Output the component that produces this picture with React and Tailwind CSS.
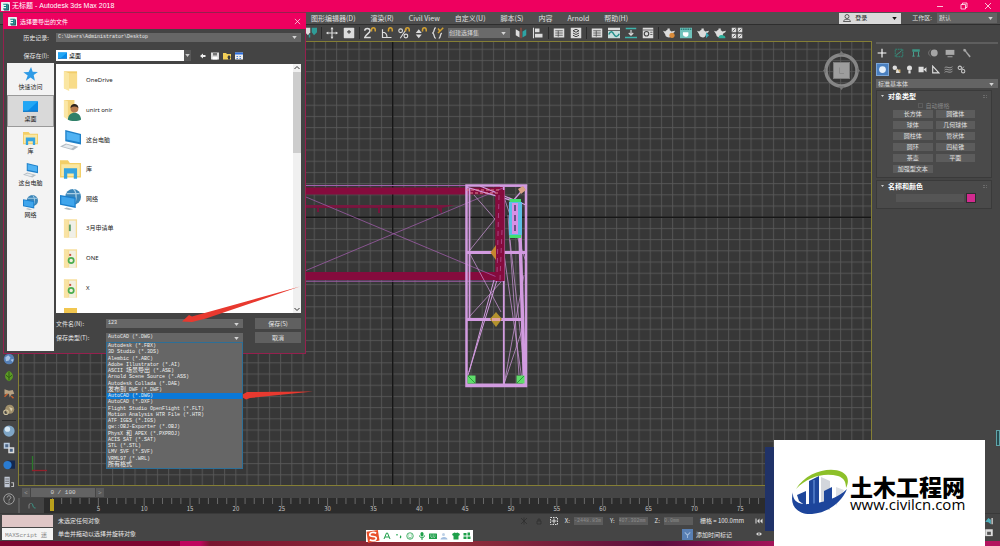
import React, { useState } from 'react';

const MENUS = ['图形编辑器(D)', '渲染(R)', 'Civil View', '自定义(U)', '脚本(S)', '内容', 'Arnold', '帮助(H)'];

const FORMATS = [
  ['Autodesk (*.FBX)'],
  ['3D Studio (*.3DS)'],
  ['Alembic (*.ABC)'],
  ['Adobe Illustrator (*.AI)'],
  ['ASCII ', '场景导出', ' (*.ASE)'],
  ['Arnold Scene Source (*.ASS)'],
  ['Autodesk Collada (*.DAE)'],
  ['', '发布到', ' DWF (*.DWF)'],
  ['AutoCAD (*.DWG)'],
  ['AutoCAD (*.DXF)'],
  ['Flight Studio OpenFlight (*.FLT)'],
  ['Motion Analysis HTR File (*.HTR)'],
  ['ATF IGES (*.IGS)'],
  ['gw::OBJ-Exporter (*.OBJ)'],
  ['PhysX ', '和', ' APEX (*.PXPROJ)'],
  ['ACIS SAT (*.SAT)'],
  ['STL (*.STL)'],
  ['LMV SVF (*.SVF)'],
  ['VRML97 (*.WRL)'],
  ['', '所有格式'],
];

const PRIMITIVES = ['长方体', '圆锥体', '球体', '几何球体', '圆柱体', '管状体', '圆环', '四棱锥', '茶壶', '平面', '加强型文本'];

const Svg = ({ className = 'size-3', children }) => (
  <svg viewBox="0 0 16 16" className={className} fill="none" aria-hidden="true">{children}</svg>
);

/* ---------- shell icons ---------- */

const MaxLogo = () => (
  <svg viewBox="0 0 16 16" className="size-[9px] shrink-0" aria-hidden="true">
    <rect width="16" height="16" rx="1" fill="#e8f4f4" />
    <path d="M4 3h8v10H4v-2h5V9H5V7h4V5H4z" fill="#137f86" />
    <path d="M12 3l2 2v10H6l-2-2h8z" fill="#0b4f5b" />
  </svg>
);

const Star = ({ className }) => (
  <Svg className={className}><path d="M8.6 0l1.7 5 5.6.2-4.5 3.4 1.3 6-4.7-3.4L3 14.6l2-5.5L.4 5.6l5.5-.3z" fill="#2f9be6" /></Svg>
);
const Desktop = ({ className }) => (
  <Svg className={className}>
    <path d="M0 2.500h16v11H0z" fill="#0a8be8" />
    <path d="M0 2.500h16L4 13.500H0z" fill="#22a7f5" />
    <path d="M0 12.500h16v1H0z" fill="#0b68b5" />
  </Svg>
);
const Library = ({ className }) => (
  <Svg className={className}>
    <path d="M0 1h6l1.500 2H16v11H0z" fill="#f3cf68" />
    <path d="M1 4h14v9H1z" fill="#fbe7a0" />
    <path d="M3 15V7h10v8h-2.500v-4h-5v4z" fill="#35a4e0" />
  </Svg>
);
const Computer = ({ className }) => (
  <Svg className={className}>
    <path d="M4 0l12 3v8L4 8.500z" fill="#1f80c8" />
    <path d="M5 1.300l10 2.500v5.500L5 7.300z" fill="#4fb2f3" />
    <path d="M0 12.500l4.500-2.300 9.500 2.600-4 2.700z" fill="#b4bdc4" />
    <path d="M2 12.500l3-1.400 6 1.700-2.500 1.400z" fill="#e6eaed" />
  </Svg>
);
const Network = ({ className }) => (
  <Svg className={className}>
    <circle cx="10" cy="6" r="6" fill="#3c86b8" />
    <path d="M10 0c3 2 3 9 0 12M5 3.500h10" stroke="#a9cfe6" />
    <path d="M0 4.500l12 2v8L0 12z" fill="#1b7fcb" />
    <path d="M1 5.700l10 1.700v5.700L1 11.200z" fill="#3fa5ec" />
    <path d="M5 14l5 1.500-3 .5-4-1z" fill="#aeb8be" />
  </Svg>
);
const Folder = ({ className }) => (
  <Svg className={className}>
    <path d="M3 1h10v13H3z" fill="#f1cd6b" />
    <path d="M3 1l4 1.500V16l-4-2z" fill="#fae6a2" />
    <path d="M7 2.500h6V14H7z" fill="#f8dc8a" />
  </Svg>
);
const UserFolder = ({ className }) => (
  <Svg className={className}>
    <path d="M3 0h8v13H3z" fill="#f4d47c" />
    <path d="M3 0l3 1v14l-3-2z" fill="#fbe7a6" />
    <circle cx="11" cy="6.500" r="3" fill="#b87c4f" />
    <path d="M8 6c0-4 6-4 6 0-2-1.500-4-1.500-6 0z" fill="#2d2520" />
    <path d="M6 15c0-7 10-7 10 0-2 1.300-8 1.300-10 0z" fill="#2f8069" />
  </Svg>
);
const DocFolder = ({ className }) => (
  <Svg className={className}>
    <path d="M3 1h10v14H3z" fill="#f6dc96" />
    <path d="M7 2h5v13H7z" fill="#f2efe0" />
    <path d="M3 1l3 1v13l-3-1z" fill="#f9e3a4" />
    <circle cx="8.500" cy="9.500" r="2" stroke="#4cae4f" strokeWidth="1.300" />
    <path d="M7 4.500h1.500V6H7z" fill="#c8503d" />
  </Svg>
);
const SheetFolder = ({ className }) => (
  <Svg className={className}>
    <path d="M3 1h10v14H3z" fill="#f6dc96" />
    <path d="M7 2h5v13H7z" fill="#f0f0e8" />
    <path d="M3 1l3 1v13l-3-1z" fill="#f9e3a4" />
    <path d="M7.500 5v5" stroke="#5a9e6a" strokeWidth="1.500" />
  </Svg>
);

const PLACES = [
  { name: '快速访问', icon: Star },
  { name: '桌面', icon: Desktop },
  { name: '库', icon: Library },
  { name: '这台电脑', icon: Computer },
  { name: '网络', icon: Network },
];

const FILES = [
  { name: 'OneDrive', icon: Folder },
  { name: 'unirt onir', icon: UserFolder },
  { name: '这台电脑', icon: Computer },
  { name: '库', icon: Library },
  { name: '网络', icon: Network },
  { name: '3月申请单', icon: SheetFolder },
  { name: 'ONE', icon: DocFolder },
  { name: 'X', icon: DocFolder },
];

/* ---------- main toolbar ---------- */

const W = '#dcdcdc';
const magnet = <path d="M10 6V4c0-4 5-4 5 0v2" stroke="#d1a032" strokeWidth="2" />;
const sheet = (
  <>
    <path d="M1 2h14v12H1z" fill={W} />
    <path d="M3 5h10M3 8h10M3 11h10M7 5v8" stroke="#444" />
  </>
);
const teapot = <path d="M0 5l3 1c2-3 6-3 8 0l5-1-1 2-3 2c0 3-2 5-4 5s-5-1-5-4z M6 2h3v2H6z" fill={W} />;

const TOOLS_LINK = [
  ['绑定', <><path d="M0 1h7v6l-3 4-4-4z" fill={W} /><path d="M9 1h7v6l-4 4-3-4zM5 10h2v4H5z" fill="#2f9c97" /></>],
];
const TOOLS_MOVE = [
  ['移动', <><path d="M8 1v14M1 8h14" stroke={W} strokeWidth="1.500" /><path d="M8 0l2 3H6zM8 16l2-3H6zM0 8l3-2v4zM16 8l-3-2v4z" fill={W} /></>],
  ['选择中心', <><rect x="1" y="1" width="14" height="14" rx="1" fill={W} /><path d="M8 4v5M5.500 6.500h5" stroke="#444" strokeWidth="1.500" /></>],
];
const TOOLS_SNAP = [
  ['捕捉', <><path d="M1 5c0-4 7-4 7 0 0 3-6 5-7 9h8" stroke={W} strokeWidth="2" />{magnet}</>],
  ['角度捕捉', <><path d="M2 3v11h12M2 7c4 0 6 3 6 7" stroke={W} strokeWidth="1.600" />{magnet}</>],
  ['百分比捕捉', <><circle cx="3.500" cy="5" r="2.500" stroke={W} strokeWidth="1.500" /><circle cx="10.500" cy="12" r="2.500" stroke={W} strokeWidth="1.500" /><path d="M3 15L11 3" stroke={W} strokeWidth="1.500" />{magnet}</>],
  ['微调器捕捉', <><path d="M5 3l4 5H1zM5 15l4-5H1z" fill={W} />{magnet}</>],
  ['命名选择集', <><path d="M5 1C2 1 4 6 1 8c3 2 1 7 4 7M9 15c3 0 1-5 4-7" stroke={W} strokeWidth="1.700" /><path d="M8 8l7-7M8 2l3 4" stroke="#d1a032" strokeWidth="2" /></>],
];
const TOOLS_ALIGN = [
  ['镜像', <><path d="M1 3l5 3v8l-5-3z" fill={W} /><path d="M15 3l-5 3v8l5-3z" fill="#2fa3a3" /><path d="M8 1v14" stroke="#c54" /></>],
  ['对齐', <><path d="M2 1v14" stroke={W} strokeWidth="1.500" /><path d="M4 2h6v5H4zM4 9h10v5H4z" fill={W} /></>],
];
const TOOLS_LAYER = [
  ['场景资源管理器', sheet],
  ['层', <><path d="M1 1h14v14H1z" fill={W} /><path d="M4 5l4-2 4 2-4 2zM4 8l4 2 4-2M4 11l4 2 4-2" stroke="#444" strokeWidth="1.300" /></>],
];
const TOOLS_EDITOR = [
  ['功能区', sheet],
  ['曲线编辑器', <><path d="M0 1h16v3H0z" fill={W} /><path d="M0 5h16v10H0z" fill="#c8dedd" /><path d="M1 10c3-6 5-4 7 0s5 3 7-1" stroke="#23908c" strokeWidth="2" /></>],
  ['图解视图', <><path d="M1 1h14v2H1zM0 13h16v2H0z" fill="#3fb5ad" /><path d="M8 4v7M5 8l3 3 3-3" stroke={W} strokeWidth="1.500" /></>],
  ['材质编辑器', <><path d="M1 1h14v14H1z" fill={W} /><path d="M1 4h14" stroke="#444" /><circle cx="6" cy="9" r="3" stroke="#444" strokeWidth="1.500" /><path d="M11 7h3M11 10h3" stroke="#444" /></>],
];
const TOOLS_RENDER = [
  ['渲染设置', <>{teapot}<circle cx="12" cy="11" r="3.500" fill="#d98b3a" /></>],
  ['渲染帧窗口', <><path d="M0 1h16v14H0z" fill="#6fc2bb" /><path d="M1 3h14" stroke="#2b7f7a" strokeWidth="2" strokeDasharray="2 1" /><path d="M4 7h7c1 5-1 6-3 6s-5-1-4-6z" fill="#fff" /></>],
  ['渲染产品', <>{teapot}<path d="M12 7l4 4-4 4z" fill="#38a9b5" /></>],
  ['云渲染', <>{teapot}<path d="M6 15c0-4 3-5 5-4 3 0 5 2 4 4z" fill="#2fb09c" /></>],
  ['图库', <><path d="M1 1h6v6H1zM9 1h6v6H9zM1 9h6v6H1zM9 9h6v6H9z" fill={W} /><path d="M2 6l4-4M10 6l4-4M2 14l4-4M10 14l4-4" stroke="#444" /></>],
];

const ToolGroup = ({ tools }) => (
  <div className="flex items-center gap-[5px]">
    {tools.map(([label, art]) => (
      <button key={label} aria-label={label}><Svg>{art}</Svg></button>
    ))}
  </div>
);
const Sep = () => <span className="h-3 w-px bg-[#2b2b2b] mx-1" />;

const Caret = () => (
  <svg viewBox="0 0 6 4" className="pointer-events-none absolute right-1 top-1/2 -mt-px w-[5px] h-[3px]" aria-hidden="true"><path d="M0 0h6L3 4z" fill="#d5d5d5" /></svg>
);

function Toolbar() {
  return (
    <div className="h-[17px] shrink-0 flex items-center pl-[305px] bg-[#454545] border-t border-[#2e2e2e]">
      <ToolGroup tools={TOOLS_LINK} />
      <Sep />
      <ToolGroup tools={TOOLS_MOVE} />
      <Sep />
      <ToolGroup tools={TOOLS_SNAP} />
      <div className="relative ml-1 mr-[5px] w-[62px]">
        <select aria-label="选择集" className="appearance-none block w-full h-[10px] bg-[#6a6a6a] text-[#d8d8d8] text-[6px] leading-[10px] px-px">
          <option>创建选择集</option>
        </select>
        <Caret />
      </div>
      <ToolGroup tools={TOOLS_ALIGN} />
      <Sep />
      <ToolGroup tools={TOOLS_LAYER} />
      <Sep />
      <ToolGroup tools={TOOLS_EDITOR} />
      <Sep />
      <ToolGroup tools={TOOLS_RENDER} />
    </div>
  );
}

/* ---------- left strip ---------- */

const STRIP_TOP = [
  ['流体', <><circle cx="8" cy="8" r="7" fill="#557fb5" /><path d="M3 6l4-3 3 3-2 4-4 1zM10 9l4-1-1 4z" fill="#a9c5e4" /></>],
  ['植物', <><path d="M8 1c7 4 7 11 0 14C1 12 1 5 8 1z" fill="#5c9a25" /><path d="M8 2v12M4 7l4 3 4-3" stroke="#2f5e12" strokeWidth="1.300" /></>],
  ['毛发', <><path d="M2 3l6 2 5-1 2 5-4 1-2 4-1-5-6 1z" fill="#b9a383" /><path d="M2 13l4-4M11 12l3 3" stroke="#c7602e" strokeWidth="2" /></>],
  ['石块', <><circle cx="9" cy="7" r="6" fill="#a08f6a" /><circle cx="4" cy="11" r="3" stroke="#cfc39f" strokeWidth="1.500" /><path d="M8 4l5 2-2 4z" fill="#d8cba8" /></>],
];
const STRIP_BOTTOM = [
  ['球', <><circle cx="8" cy="8" r="7.500" fill="#7fa6c6" /><circle cx="6" cy="5.500" r="3.500" fill="#d6e7f3" /></>],
  ['复制', <><path d="M1 1h8v8H1z" fill="#b8cbe0" /><path d="M7 7h8v8H7z" fill={W} /><path d="M3 3h4v4H3zM9 9h4v4H9z" fill="#4c6585" /></>],
  ['开关', <><path d="M6 2h10v11H6z" fill="#132850" /><circle cx="6" cy="8" r="5.500" fill="#2a7bd0" /></>],
  ['列表', <><path d="M2 1h7v14H2z" fill="#bfc6d2" /><path d="M3 4h5M3 7h5M3 10h5" stroke="#555" /><path d="M11 9h3v5h-3" stroke="#bbb" strokeWidth="1.500" /></>],
  ['帮助', <><circle cx="8" cy="8" r="7" stroke="#a8a8a8" strokeWidth="1.200" /><path d="M5.500 6c0-3 5-3 5 0 0 2-2.500 1.500-2.500 4M8 11.500V13" stroke="#a8a8a8" strokeWidth="1.300" /></>],
];

function LeftStrip() {
  const cell = ([label, art]) => (
    <button key={label} aria-label={label} className="h-[14px] flex items-center"><Svg>{art}</Svg></button>
  );
  return (
    <div className="w-[18px] shrink-0 flex flex-col items-center justify-end gap-[3px] pb-[7px] bg-[#454545]">
      {STRIP_TOP.map(cell)}
      <span className="h-px w-[14px] bg-[#2a2a2a]" />
      {STRIP_BOTTOM.map(cell)}
    </div>
  );
}

/* ---------- viewport ---------- */

function Viewport() {
  return (
    <div className="flex-1 min-h-0 flex border border-[#857f35] bg-[#373737]">
      <svg className="flex-1 min-w-0 h-auto" role="img" aria-label="视口">
        <defs>
          <pattern id="grid" width="11.2" height="11.2" x="0.1" y="3.9" patternUnits="userSpaceOnUse">
            <path d="M.6 0V11.200M0 .6H11.200" stroke="#585858" strokeWidth=".9" fill="none" />
          </pattern>
        </defs>
        <g transform="translate(-19 -42)">
          <rect width="2000" height="2000" fill="url(#grid)" />
          <path d="M392.700 0V2000M0 217.300H2000" stroke="#161616" strokeWidth="1.400" />

          {/* horizontal truss */}
          <g fill="#850b3d">
            <path d="M300 187.500H505V194.500H300zM300 272H505V280H300zM495.500 187H504.500V281H495.500z" />
            <path d="M300 205H455L442 208V213H441L437 208H380V213H378V208H319V212H317V208H300z" fillOpacity=".8" />
          </g>
          <g stroke="#a35fae" strokeWidth="1" fill="none">
            <path d="M300 185.500H466M300 281.200H505" />
            <path d="M300 194.500L504 280M300 273L503 188" strokeOpacity=".75" />
          </g>

          {/* tower */}
          <g stroke="#d29be0" fill="none">
            <path d="M466.500 185.500H526V386H466.500z" strokeWidth="2.500" />
            <path d="M469.500 188V318M503.800 187V385" strokeWidth="1.800" />
            <path d="M466 252.500H526M466 319.500H524" strokeWidth="3" />
            <path d="M466 384.500H526" strokeWidth="2" />
            <path d="M519 200L524.500 386" strokeWidth="3.500" />
            <path d="M474 195L495 219L470 250M470 254L501 312M501 282L470 316M504 254L522 380M508 215L519 375M510 240L525 375M524 275L504 385M522 330L504 384M505 200L526 262" strokeWidth=".7" />
            <path d="M497 280L468 375M494 280L469 372" strokeWidth="1" />
            <path d="M466 187L520 203M480 186L526 205M500 186H526L512 202" strokeWidth="1.300" />
          </g>
          <path d="M495.500 190H504.500V281H495.500z" fill="#850b3d" />
          <path d="M499 195L497 275M502 230L500 280" stroke="#d29be0" strokeOpacity=".6" strokeWidth=".7" strokeDasharray="5 4" />
          <path d="M466 190H500M470 193H498" stroke="#e08a94" strokeWidth="1" strokeDasharray="3 2" />
          <path d="M518 189l5-3 3 4-5 4z" fill="#d8a285" />
          <path d="M509.500 199H521V238H509.500z" fill="#41e06f" />
          <path d="M509 202H522V235H509z" fill="#5bbde6" />
          <path d="M512 203H518V234H512z" fill="#d78fe6" />
          <path d="M515 205V233" stroke="#363057" strokeWidth="1.300" strokeDasharray="6 4" />
          <path d="M496 245V260L490.500 252.500z" fill="#c6862f" />
          <path d="M496 312l6 7-6 8-6-8z" fill="#b3922e" />
          <path d="M492 319.500H500" stroke="#e0a2a0" strokeWidth="3" />
          <path d="M467.500 375.500h8v8h-8zM516.500 375.500h8v8h-8z" fill="#5fdd6b" />
          <path d="M468 376l7 7M517 383l7-7" stroke="#2c9b3c" />

          {/* axis tripod */}
          <path d="M32.500 471V456" stroke="#2c7a2c" strokeWidth="1.300" />
          <path d="M32 470.500H47" stroke="#93202b" strokeWidth="1.300" />

          {/* view cube */}
          <circle cx="841.500" cy="70.500" r="15.500" stroke="#868686" strokeWidth="3.500" fill="none" />
          <path d="M841.500 51l3 4h-6zM841.500 90l3-4h-6zM823 70.500l3-3v6zM860 70.500l-3-3v6z" fill="#777" />
          <rect x="833.500" y="62.500" width="16" height="16" fill="#9d9d9d" stroke="#7c7c7c" />
          <path d="M839.500 67.500V73.500H844" stroke="#8a8a8a" fill="none" />
        </g>
      </svg>
    </div>
  );
}

const FRAME = 9.17;
const LAST_FRAME = 79;

function TimeSlider() {
  const ticks = Array.from({ length: LAST_FRAME + 1 }, (_, i) => i);
  return (
    <>
      <div className="h-3 shrink-0 flex items-center gap-px pl-1 bg-[#454545] text-[6px] leading-[9px] text-[#d5d5d5]">
        <button aria-label="上一帧" className="w-2 h-[9px] bg-[#5a5a5a] text-[#9a9a9a]">&lt;</button>
        <button className="w-[64px] h-[9px] bg-[#636363] font-['Liberation_Mono',monospace]">0 / 100</button>
        <button aria-label="下一帧" className="w-2 h-[9px] bg-[#5a5a5a] text-[#9a9a9a]">&gt;</button>
      </div>
      <div className="h-[15px] shrink-0 flex bg-[#2c2c2c]">
        <div className="w-[26px] shrink-0 flex items-center justify-center bg-[#434343] border-l-2 border-[#5c5c5c]">
          <Svg className="size-2"><path d="M2 13V5l3-2" stroke="#999" strokeWidth="1.500" /><path d="M7 3c4 0 1 9 8 9" stroke="#3aa08f" strokeWidth="2" /></Svg>
        </div>
        <svg className="flex-1 min-w-0 h-[15px]" role="img" aria-label="时间轴">
          {ticks.map(i => (
            <path key={i} d={`M${8.500 + i * FRAME} 0V${i % 5 ? 6 : 8}`} stroke="#6a6a6a" />
          ))}
          {ticks.filter(i => i && i % 5 === 0).map(i => (
            <text key={i} x={8.500 + i * FRAME} y="13" textAnchor="middle" fill="#c4c4c4" fontSize="6">{i}</text>
          ))}
          <rect x="6" y="1" width="4" height="12" fill="#b9a01c" />
        </svg>
      </div>
    </>
  );
}

/* ---------- command panel ---------- */

const TABS = [
  ['创建', <path d="M8 1v14M1 8h14" stroke="#fff" strokeWidth="1.800" />],
  ['修改', <><path d="M2 2h12v12H2z" stroke="#2f8a78" strokeWidth="1.500" strokeDasharray="3 1" /><path d="M4 12c2-5 4-2 8-8" stroke="#41a48f" strokeWidth="1.500" /></>],
  ['层次', <><path d="M2 2h12v4H2z" fill="#3c9483" /><path d="M4 6v7M12 6v7M2 13h4M10 13h4" stroke="#4aa392" strokeWidth="1.500" /></>],
  ['运动', <><circle cx="10" cy="8" r="5.500" fill="#a5a5a5" /><path d="M4 3c-4 3-4 7 0 10" stroke="#777" strokeWidth="1.500" /></>],
  ['显示', <><path d="M1 3h14v8H1z" fill="#a9a9a9" /><path d="M4 14h8" stroke="#a9a9a9" strokeWidth="1.500" /></>],
  ['工具', <path d="M3 1c-2 2-1 5 2 5l7 9 2-2-7-8c0-3-2-4-4-4z" fill="#a5a5a5" />],
];
const KINDS = [
  ['几何体', <circle cx="8" cy="8" r="6" fill="#e6f0fa" />],
  ['图形', <><circle cx="5" cy="5" r="4" fill="#ddd" /><path d="M7 8h8v6H7z" fill="#c9a96a" /><path d="M9 6l5 8H7z" fill="#ddd" /></>],
  ['灯光', <><circle cx="8" cy="5.500" r="4.500" fill="#ddd" /><path d="M6 10h4v5H6z" fill="#ddd" /></>],
  ['摄影机', <path d="M1 3h9v10H1zM10 8l5-4v9z" fill="#ddd" />],
  ['辅助对象', <path d="M3 2v12h11z" stroke="#ddd" strokeWidth="2" />],
  ['空间扭曲', <path d="M1 5c4-4 8 3 14-2M1 9c4-4 8 3 14-2M1 13c4-4 8 3 14-2" stroke="#bbb" strokeWidth="1.300" />],
  ['系统', <><circle cx="5" cy="5" r="3" stroke="#ccc" strokeWidth="1.800" /><circle cx="11" cy="11" r="3" stroke="#ccc" strokeWidth="1.800" /><path d="M12 3L8 8" stroke="#ccc" strokeWidth="1.500" /></>],
];

const Rollout = ({ title, children }) => (
  <section className="mr-[6px] border border-[#3a3a3a] bg-[#4a4a4a] px-1 pb-1">
    <h3 className="flex items-center gap-1 h-[10px] text-[7px] leading-[10px] font-bold text-white">
      <svg viewBox="0 0 6 4" className="w-[3px] h-[2px]" aria-hidden="true"><path d="M0 0h6L3 4z" fill="#ccc" /></svg>
      {title}
      <span className="ml-auto w-1 h-[3px] border-y border-dotted border-[#6b6b6b]" />
    </h3>
    {children}
  </section>
);

function CommandPanel() {
  return (
    <aside className="w-32 shrink-0 flex flex-col bg-[#454545] pl-1 pr-[2px] text-[6px] text-[#d0d0d0]">
      <div className="h-[2px] mt-px bg-[#5e5e5e]" />
      <div className="flex items-center gap-[7px] h-[17px] pl-px">
        {TABS.map(([label, art]) => (
          <button key={label} aria-label={label}><Svg className="size-[10px]">{art}</Svg></button>
        ))}
      </div>
      <div className="flex items-center gap-[2px] h-4">
        {KINDS.map(([label, art], i) => (
          <button key={label} aria-label={label} className={i === 0 ? 'p-px bg-[#4a80c0] border border-[#7aa6d8]' : 'p-px'}>
            <Svg className="size-[9px]">{art}</Svg>
          </button>
        ))}
      </div>
      <div className="relative mt-[2px]">
        <select aria-label="类别" className="appearance-none block w-full h-[9px] bg-[#646464] text-[#dcdcdc] text-[6px] leading-[9px] px-[2px]">
          <option>标准基本体</option>
        </select>
        <Caret />
      </div>
      <div className="mt-[2px] flex flex-col gap-[2px]">
        <Rollout title="对象类型">
          <label className="flex items-center justify-center gap-[2px] h-[9px] text-[#858585]">
            <input type="checkbox" disabled className="appearance-none size-[5px] border border-[#5c5c5c]" />
            自动栅格
          </label>
          <div className="mx-3 grid grid-cols-2 gap-x-[3px] gap-y-[3px]">
            {PRIMITIVES.map(p => (
              <button key={p} className="h-2 bg-[#5c5c5c] text-[6px] leading-[8px] text-[#e0e0e0]">{p}</button>
            ))}
          </div>
        </Rollout>
        <Rollout title="名称和颜色">
          <div className="mt-[2px] ml-[15px] mb-px flex items-center gap-[2px]">
            <input aria-label="名称" className="w-[68px] h-2 bg-[#555]" />
            <button aria-label="颜色" className="size-[10px] bg-[#d22a8f] border border-[#2d2d2d]" />
          </div>
        </Rollout>
      </div>
      <div className="mt-auto mb-[67px] -mr-[2px] self-end w-1 h-4 border border-[#5fa3a8] bg-[#274a4e]" />
    </aside>
  );
}

/* ---------- export dialog ---------- */

function ExportDialog() {
  const [type, setType] = useState(8);
  const field = 'block w-full h-[9px] appearance-none bg-[#666] text-[#e8e8e8] text-[5px] leading-[9px] px-[2px] font-["Liberation_Mono","Noto_Sans_CJK_SC",monospace]';
  return (
    <div role="dialog" aria-label="选择要导出的文件" className="absolute left-[3px] top-3 w-[303px] bg-[#444] border border-[#96204e] pb-[2px] text-[6px] text-[#e4e4e4]">
      <div className="h-4 flex items-center gap-[3px] bg-[#ee005f] -mx-px px-[5px] text-white">
        <MaxLogo />
        <span>选择要导出的文件</span>
        <button aria-label="关闭" className="ml-auto"><Svg className="size-[7px]"><path d="M2 2l12 12M14 2L2 14" stroke="#fff" strokeWidth="1.500" /></Svg></button>
      </div>

      <div className="mt-[3px] h-[10px] flex items-center pr-1">
        <label htmlFor="history" className="w-[52px] pr-[7px] text-right">历史记录:</label>
        <div className="relative flex-1">
          <select id="history" className={field}><option>C:\Users\Administrator\Desktop</option></select>
          <Caret />
        </div>
      </div>

      <div className="mt-2 h-[11px] flex items-center">
        <label htmlFor="saveIn" className="w-[52px] pr-[7px] text-right">保存在(I):</label>
        <div className="w-[135px] h-[11px] flex items-center bg-white pl-[2px]">
          <Desktop className="size-[9px]" />
          <select id="saveIn" className="appearance-none flex-1 min-w-0 h-[11px] pl-[2px] text-black text-[6px] leading-[11px]"><option>桌面</option></select>
          <span className="relative w-[7px] h-[11px] bg-[#585858]">
            <svg viewBox="0 0 6 4" className="m-auto mt-1 w-[5px] h-[3px]" aria-hidden="true"><path d="M0 0h6L3 4z" fill="#ccc" /></svg>
          </span>
        </div>
        <div className="flex gap-1 ml-2">
          <button aria-label="后退"><Svg className="size-2"><path d="M2 8l6-5v3h5v4H8v3z" fill="#eee" /></Svg></button>
          <button aria-label="保存位置"><Svg className="size-2"><path d="M0 1h16v14H0z" fill="#ddd" /><path d="M4 2h8v5H4z" fill="#777" /><path d="M3 10h10v5H3z" fill="#fff" /></Svg></button>
          <button aria-label="向上"><Svg className="size-2"><path d="M0 2h6l2 2h8v11H0z" fill="#f3cf57" /><path d="M10 15v-4H8l4-5 4 5h-2v4z" fill="#3a3a3a" /></Svg></button>
          <button aria-label="视图"><Svg className="size-2"><path d="M0 1h16v14H0z" fill="#eee" /><path d="M0 1h16v4H0z" fill="#2b6fe0" /><path d="M3 8h3v2H3zM9 8h3v2H9zM3 12h3v2H3zM9 12h3v2H9z" fill="#4e86d8" /></Svg></button>
        </div>
      </div>

      <div className="mt-[2px] pl-[3px] pr-1 flex gap-[2px]">
        <div className="w-[47px] shrink-0 flex flex-col bg-[#f3f3f3] text-[#222]">
          {PLACES.map(({ name, icon: Icon }, i) => (
            <button key={name} className={i === 1
              ? 'h-8 flex flex-col items-center justify-center gap-px border border-[#9a9a9a] bg-[#d9d9d9] leading-[8px]'
              : 'h-8 flex flex-col items-center justify-center gap-px leading-[8px]'}>
              <Icon className="size-[15px]" />
              {name}
            </button>
          ))}
        </div>
        <div className="flex-1 pb-2">
          <div className="flex mt-px bg-white overflow-hidden">
            <div className="flex-1">
              <div className="h-[239px] grid grid-rows-8 pt-[2px]">
                {FILES.map(({ name, icon: Icon }) => (
                  <button key={name} className="flex items-center gap-[5px] pl-1 text-[#222] font-['Noto_Sans','Noto_Sans_CJK_SC',sans-serif]">
                    <Icon className="size-[21px]" />
                    {name}
                  </button>
                ))}
              </div>
              <div className="h-[10px] pt-[5px] pl-2"><div className="w-[13px] h-[5px] bg-[#f1c64f]" /></div>
            </div>
            <div className="w-2 flex flex-col items-center justify-between bg-[#f0f0f0]">
              <Svg className="size-2"><path d="M3 10l5-5 5 5" stroke="#333" strokeWidth="2" /></Svg>
              <span className="w-2 h-[81px] bg-[#cdcdcd] mb-auto" />
              <Svg className="size-2"><path d="M3 6l5 5 5-5" stroke="#333" strokeWidth="2" /></Svg>
            </div>
          </div>

          <div className="mt-[5px] grid grid-cols-[50px_1fr_46px] items-center gap-y-[3px]">
            <label htmlFor="fname">文件名(N):</label>
            <div className="relative mr-3">
              <input id="fname" defaultValue="123" className={field} />
              <Caret />
            </div>
            <button className="h-[11px] bg-[#606060] leading-[11px]">保存(S)</button>
            <label htmlFor="ftype">保存类型(T):</label>
            <div className="relative mr-3">
              <select id="ftype" className={field} value={type} onChange={e => setType(Number(e.target.value))}>
                {FORMATS.map((f, i) => <option key={i} value={i}>{f.join('')}</option>)}
              </select>
              <Caret />
              <ul role="listbox" aria-label="保存类型" className="absolute left-0 right-0 top-[9px] z-10 h-[127px] grid grid-rows-20 border border-[#2d6f97] bg-[#666] font-['Liberation_Mono','Noto_Sans_CJK_SC',monospace] text-[5px] leading-[6px] text-[#f0f0f0]">
                {FORMATS.map(([a, zh, b], i) => (
                  <li key={i} role="option" aria-selected={i === type} onClick={() => setType(i)}
                    className={i === type ? 'bg-[#0a78d7] px-px whitespace-pre' : 'px-px whitespace-pre'}>
                    {a}{zh && <span className="text-[6px] leading-[5px]">{zh}</span>}{b}
                  </li>
                ))}
              </ul>
            </div>
            <button className="h-[11px] bg-[#606060] leading-[11px]">取消</button>
          </div>
        </div>
      </div>
    </div>
  );
}

/* ---------- bottom ---------- */

const Coord = ({ axis, value }) => (
  <label className="flex items-center gap-1">
    {axis}:
    <input defaultValue={value} className="w-[29px] h-2 bg-[#5c5c5c] text-[#8d8d8d] text-[5px] font-['Liberation_Mono',monospace]" />
  </label>
);

function StatusBar() {
  return (
    <footer className="relative h-7 shrink-0 flex items-center bg-[#454545] border-t border-[#393939] text-[6px] text-[#e8e8e8]">
      <div className="ml-[2px] w-[51px] flex flex-col gap-px">
        <div className="h-3 bg-[#dfc6c6]" />
        <input aria-label="MAXScript" defaultValue="MAXScript 迷" className="h-3 px-[3px] bg-[#f4f4f4] text-[#888] text-[6px] font-['Liberation_Mono','Noto_Sans_CJK_SC',monospace]" />
      </div>
      <div className="ml-[5px] flex flex-col gap-[5px] leading-[8px]">
        <p>未选定任何对象</p>
        <p>单击并拖动以选择并旋转对象</p>
      </div>
      <div className="ml-auto mr-[237px] flex flex-col gap-[3px]">
        <div className="flex items-center gap-[7px] h-[10px]">
          <Svg className="size-2"><path d="M2 2l12 12M14 2L2 14M8 1v14" stroke="#2e2e2e" strokeWidth="1.500" /></Svg>
          <Svg className="size-2"><path d="M4 8h8v6H4zM6 8V4h4v4" stroke="#2e2e2e" strokeWidth="1.500" /></Svg>
          <Svg className="size-2"><path d="M1 1h14v14H1z" stroke={W} strokeWidth="2" strokeDasharray="3 2" /><path d="M8 3v10M3 8h10" stroke={W} strokeWidth="2" /></Svg>
          <Coord axis="X" value="-2448.83m" />
          <Coord axis="Y" value="407.302mm" />
          <Coord axis="Z" value="0.0mm" />
          <span>栅格 = 100.0mm</span>
          <button aria-label="转至开头" className="ml-1"><Svg className="size-2"><path d="M2 3v10" stroke={W} strokeWidth="2" /><path d="M9 3v10L4 8zM15 3v10l-5-5z" fill={W} /></Svg></button>
        </div>
        <div className="flex items-center justify-end gap-[3px] h-[11px]">
          <Svg className="size-[11px]"><path d="M0 0h16v16H0z" fill="#587fb3" /><path d="M4 5l4 4 4-4M8 9v4" stroke="#9fbadb" strokeWidth="1.500" /></Svg>
          <button className="mr-5">添加时间标记</button>
          <Svg className="size-2"><path d="M7 4v8L2 8zM9 4v8l5-4z" fill={W} /></Svg>
        </div>
      </div>
      <div className="absolute right-[6px] top-[2px] flex flex-col gap-[2px]">
        <Svg className="size-[10px]"><path d="M2 9l5-6 4 3v7l-4-3z" fill="#4fb0bd" /><path d="M13 3v10" stroke={W} strokeWidth="2" /></Svg>
        <Svg className="size-[10px]"><path d="M2 2h12v11H2z" fill={W} /><path d="M5 6h6v5H5z" fill="#555" /></Svg>
      </div>
    </footer>
  );
}

const IME_ART = [
  <path d="M2 14L7 2h2l5 12M4 10h8" stroke="#1ea04a" strokeWidth="2" />,
  <path d="M4 4v3M10 8c2 0 2 3 0 4" stroke="#1ea04a" strokeWidth="2.500" />,
  <><circle cx="8" cy="8" r="6.500" stroke="#1ea04a" strokeWidth="1.600" /><path d="M4.500 9c2 4 5 4 7 0M5.500 5v2M10.500 5v2" stroke="#1ea04a" strokeWidth="1.500" /></>,
  <><rect x="5" y="0" width="6" height="9" rx="3" fill="#1ea04a" /><path d="M3 7c0 6 10 6 10 0M8 11v5" stroke="#1ea04a" strokeWidth="2" /></>,
  <><rect x="0" y="3" width="16" height="11" rx="1" fill="#1ea04a" /><path d="M2 6h12M2 8.500h12M4 11h8" stroke="#fff" strokeDasharray="2 1" /></>,
  <><circle cx="7" cy="5" r="3" fill="#bcd0e6" /><path d="M1 15c0-7 14-7 14 0z" fill="#a3bfe0" /></>,
  <path d="M5 1l3 1 3-1 5 3-2 4-1-1v8H3V7L2 8 0 4z" fill="#1ea04a" />,
  <path d="M1 2h6v5H1zM9 1h5v6H9zM1 9h6v5H1zM9 9h6v5H9z" fill="#1ea04a" />,
];

const ImeBar = () => (
  <div className="absolute left-[366px] bottom-1 w-[107px] h-3 flex items-center justify-between bg-white pr-[2px]">
    <svg viewBox="0 0 16 16" className="w-[14px] h-[13px]" role="img" aria-label="输入法">
      <path d="M0 2L14 0l2 13L2 16z" fill="#e8502a" />
      <path d="M12 4C9 2 4 3 4 6c0 3 8 1 8 4 0 3-5 4-8 2" stroke="#fff" strokeWidth="2" fill="none" />
    </svg>
    {IME_ART.map((art, i) => <Svg key={i} className="size-2">{art}</Svg>)}
  </div>
);

const Watermark = () => (
  <div className="absolute right-[15px] bottom-0 w-[220px] h-[106px] flex items-end">
    <div className="w-[9px] h-[84px] mb-[15px] bg-[#203268]" />
    <a href="#civilcn" className="flex-1 h-full bg-white flex items-center pl-[18px] text-black">
      <svg viewBox="0 0 58 48" className="w-[58px] h-12 shrink-0" aria-hidden="true">
        <path d="M29 8l9 4v29l-9 0z" fill="#d3d6dc" />
        <path d="M44 18l8 3-8 16z" fill="#dde0e4" />
        <path d="M17 12l10-5v31l-10 1zM32 22l8-4v14l-8 5zM5 26l9-4v15l-7-5z" fill="#1f479b" />
        <path d="M22 11v26" stroke="#4873c0" strokeWidth="2" />
        <path d="M4 20C14 3 38-3 50 3c7 4 7 10 4 16 0-6-2-10-8-12C32 3 15 8 4 20z" fill="#8dc02a" />
        <path d="M1 23c-1 9 6 13 16 12 14-1 29-6 38-15-6 15-21 24-35 25C6 46-3 37 1 23z" fill="#1d459b" />
      </svg>
      <div className="flex flex-col pt-[3px]">
        <span className="text-[23px] leading-[20px] font-black [font-style:oblique_8deg] whitespace-nowrap font-['Noto_Sans_CJK_SC',sans-serif]">土木工程网</span>
        <span className="text-[15px] leading-[17px] font-medium font-['Open_Sans',sans-serif]">www.civilcn.com</span>
      </div>
    </a>
  </div>
);

const Arrows = () => (
  <svg className="pointer-events-none absolute left-0 top-0 w-80 h-[400px]" aria-hidden="true">
    <path d="M182 321.500L189 315L192 316.500L300 286.500L206 318.500L192 322z" fill="#e8392f" />
    <path d="M240 396L247 392L313 391.500L250 398L246 399.500z" fill="#e8392f" />
  </svg>
);

export default function App() {
  return (
    <div className="relative min-h-screen flex flex-col overflow-hidden bg-[#454545] font-['Noto_Sans_CJK_SC','Noto_Sans',sans-serif] text-[#e0e0e0]">
      <header className="h-3 shrink-0 flex items-center gap-[2px] pl-px pr-2 bg-[#ee005f] text-white text-[7px] leading-[12px]">
        <MaxLogo />
        <h1 className="font-['Liberation_Sans','Noto_Sans_CJK_SC',sans-serif]">无标题 - Autodesk 3ds Max 2018</h1>
        <div className="ml-auto flex gap-4">
          <button aria-label="最小化"><Svg className="size-2"><path d="M2 9h12" stroke="#fff" strokeWidth="1.500" /></Svg></button>
          <button aria-label="还原"><Svg className="size-2"><path d="M2 5h9v9H2zM5 5V2h9v9h-3" stroke="#fff" strokeWidth="1.500" /></Svg></button>
          <button aria-label="关闭"><Svg className="size-2"><path d="M2 2l12 12M14 2L2 14" stroke="#fff" strokeWidth="1.500" /></Svg></button>
        </div>
      </header>

      <nav className="h-3 shrink-0 flex items-center gap-[15px] pl-[311px] pr-[3px] bg-[#505050] text-[7px] leading-[12px]">
        {MENUS.map(m => <button key={m} className="whitespace-nowrap">{m}</button>)}
        <div className="ml-auto flex items-center">
          <button className="w-[62px] h-[11px] flex items-center gap-1 px-1 bg-[#dadada] text-[#222] text-[6px]">
            <Svg className="size-2"><circle cx="8" cy="5" r="4" stroke="#333" strokeWidth="1.500" /><path d="M1 15c0-6 14-6 14 0z" stroke="#333" strokeWidth="1.500" /></Svg>
            登录
            <svg viewBox="0 0 6 4" className="ml-auto w-[5px] h-[3px]" aria-hidden="true"><path d="M0 0h6L3 4z" fill="#111" /></svg>
          </button>
          <label htmlFor="workspace" className="ml-[11px] mr-[5px] text-[6px]">工作区:</label>
          <div className="relative w-[60px]">
            <select id="workspace" className="appearance-none block w-full h-[10px] bg-[#646464] text-[#ddd] text-[6px] leading-[10px] px-[2px]"><option>默认</option></select>
            <Caret />
          </div>
        </div>
      </nav>

      <Toolbar />

      <main className="flex-1 min-h-0 flex">
        <LeftStrip />
        <div className="flex-1 min-w-0 flex flex-col">
          <Viewport />
          <TimeSlider />
        </div>
        <CommandPanel />
      </main>

      <StatusBar />
      <div className="h-[5px] shrink-0 bg-[linear-gradient(90deg,#7d0530_0,#7d0530_18%,#c0055f_18%,#c0055f_20%,#7a1530_21%,#92303a_45%,#5c0d3e_66%,#b3155f_80%)]" />

      <ExportDialog />
      <ImeBar />
      <Watermark />
      <Arrows />
    </div>
  );
}
